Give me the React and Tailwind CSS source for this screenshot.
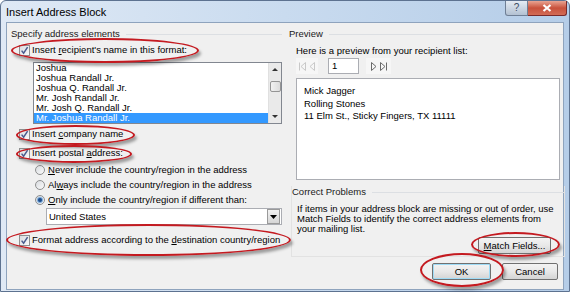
import React from 'react'

const ui = "font-['Liberation_Sans',Arial,sans-serif]"

const CheckBox = () => (
  <span className="w-[11px] h-[11px] border border-[#8e8f8f] bg-gradient-to-br from-[#d9dce0] to-[#fafafa] flex items-center justify-center shrink-0">
    <svg width="9" height="9" viewBox="0 0 9 9">
      <path d="M1.6 4.6 L3.6 7.2 L7.6 1.2" fill="none" stroke="#4a5c8e" strokeWidth="1.5" />
    </svg>
  </span>
)

const Radio = ({ on }) => (
  <span className="w-[10px] h-[10px] rounded-full border border-[#8e8f8f] bg-gradient-to-br from-[#d8dbdf] to-[#fbfbfb] flex items-center justify-center shrink-0">
    {on && <span className="w-[4px] h-[4px] rounded-full bg-[#1f4d8c] shadow-[0_0_1px_1px_#6fa3d8]" />}
  </span>
)

const U = ({ children }) => <span className="underline underline-offset-1">{children}</span>

const CheckRow = ({ children, className = '' }) => (
  <div className={`h-[12px] flex items-center ml-[8px] gap-[2px] ${className}`}>
    <CheckBox />
    <span className="leading-none">{children}</span>
  </div>
)

const RadioRow = ({ on, children, className = '' }) => (
  <div className={`h-[12px] flex items-center ml-[24px] gap-[3px] ${className}`}>
    <Radio on={on} />
    <span className="leading-none">{children}</span>
  </div>
)

const GroupLabel = ({ children }) => (
  <div className="h-[12px] flex items-center gap-[6px]">
    <span className="leading-none text-[#1a1a1a]">{children}</span>
    <span className="flex-1 h-px bg-[#dcdfe3]" />
  </div>
)

const Button = ({ children, className = '' }) => (
  <div className={`h-[17px] flex items-center justify-center rounded-[2px] border border-[#707070] bg-gradient-to-b from-[#f3f3f3] via-[#e8e8e8] to-[#d4d4d4] leading-none ${className}`}>
    {children}
  </div>
)

const Ring = ({ className }) => (
  <div className={`absolute rounded-[50%] border-2 border-[#c41a20] shadow-[2px_3px_3px_rgba(0,0,0,0.35)] ${className}`} />
)

const names = ['Joshua', 'Joshua Randall Jr.', 'Joshua Q. Randall Jr.', 'Mr. Josh Randall Jr.', 'Mr. Josh Q. Randall Jr.', 'Mr. Joshua Randall Jr.']

export default function App() {
  return (
    <div className={`w-[571px] h-[293px] relative bg-white ${ui} text-[9.5px] text-black`}>
      <div className="w-[570px] h-[292px] rounded-t-[6px] border border-[#5d7290] bg-gradient-to-r from-[#dfe9f5] via-[#c9dbef] to-[#b5cde8] flex flex-col">
        {/* Title bar */}
        <div className="h-[21px] flex items-start">
          <span className="ml-[5px] mt-[6px] text-[11px] leading-none text-black">Insert Address Block</span>
          <div className="ml-auto mr-[2px] flex">
            <div className="w-[23px] h-[15px] rounded-bl-[3px] border border-t-0 border-[#6f7f95] bg-gradient-to-b from-[#e4ebf3] to-[#b3c1d2] flex items-center justify-center text-[10px] leading-none text-[#3b4b63]">?</div>
            <div className="w-[39px] h-[15px] rounded-br-[3px] border border-t-0 border-l-0 border-[#7a2a2a] bg-gradient-to-b from-[#e8a493] via-[#c8513c] to-[#d26b55] flex items-center justify-center">
              <svg width="10" height="8" viewBox="0 0 10 8"><path d="M1.5 1 L8.5 7 M8.5 1 L1.5 7" stroke="white" strokeWidth="2.2" /></svg>
            </div>
          </div>
        </div>

        {/* Body */}
        <div className="mx-[5px] h-[268px] border border-[#8ea3bd] bg-[#f0f0f0] relative flex">
          {/* Left column */}
          <div className="ml-[4px] w-[271px] flex flex-col">
            <div className="mt-[5px]"><GroupLabel>Specify address elements</GroupLabel></div>
            <CheckRow className="mt-[4px]">Insert <U>r</U>ecipient's name in this format:</CheckRow>
            <div className="mt-[6px] ml-[22px] w-[249px] h-[62px] border border-[#828790] bg-white flex">
              <div className="flex-1 flex flex-col overflow-hidden">
                {names.map((n, i) => (
                  <div key={n} className={`h-[10px] shrink-0 pl-[2px] leading-[10px] ${i === 5 ? 'bg-[#3399ff] text-white' : ''}`}>{n}</div>
                ))}
              </div>
              <div className="w-[13px] bg-[#eaeaea] border-l border-[#e0e0e0] flex flex-col items-center">
                <svg className="mt-[4px]" width="6" height="4" viewBox="0 0 6 4"><path d="M0 4 L3 1 L6 4 Z" fill="#333" /></svg>
                <div className="mt-[10px] w-[11px] h-[11px] rounded-[2px] border border-[#959595] bg-gradient-to-r from-[#f2f2f2] to-[#dcdcdc]" />
                <svg className="mt-auto mb-[4px]" width="6" height="4" viewBox="0 0 6 4"><path d="M0 0 L3 3 L6 0 Z" fill="#333" /></svg>
              </div>
            </div>
            <CheckRow className="mt-[4px]">Insert <U>c</U>ompany name</CheckRow>
            <CheckRow className="mt-[7px]">Insert postal <U>a</U>ddress:</CheckRow>
            <RadioRow className="mt-[5px]"><U>N</U>ever include the country/region in the address</RadioRow>
            <RadioRow className="mt-[3px]">Al<U>w</U>ays include the country/region in the address</RadioRow>
            <RadioRow on className="mt-[3px]"><U>O</U>nly include the country/region if different than:</RadioRow>
            <div className="mt-[2px] ml-[35px] w-[236px] h-[17px] border border-[#abadb3] bg-white flex items-center">
              <span className="pl-[2px] flex-1 leading-none">United States</span>
              <div className="w-[13px] h-[15px] mr-px bg-gradient-to-b from-[#f2f2f2] to-[#d6d6d6] border border-[#9a9a9a] flex items-center justify-center">
                <svg width="7" height="4" viewBox="0 0 7 4"><path d="M0 0 L7 0 L3.5 4 Z" fill="#000" /></svg>
              </div>
            </div>
            <CheckRow className="mt-[9px]">Format address according to the <U>d</U>estination country/region</CheckRow>
          </div>

          {/* Right column */}
          <div className="ml-[7px] w-[275px] flex flex-col">
            <div className="mt-[5px]"><GroupLabel>Preview</GroupLabel></div>
            <div className="mt-[5px] ml-[7px] h-[12px] flex items-center leading-none">Here is a preview from your recipient list:</div>
            <div className="mt-px ml-[7px] h-[16px] flex items-center">
              <div className="w-[22px] h-[16px] bg-[#f6f6f6] flex items-center justify-center gap-[3px]">
                <svg width="7" height="9" viewBox="0 0 7 9"><path d="M0.5 0.5 V8.5 M6.5 0.5 L2 4.5 L6.5 8.5 Z" fill="none" stroke="#c8c8c8" /></svg>
                <svg width="6" height="9" viewBox="0 0 6 9"><path d="M5.5 0.5 L1 4.5 L5.5 8.5 Z" fill="none" stroke="#c8c8c8" /></svg>
              </div>
              <div className="ml-[10px] w-[31px] h-[16px] border border-[#abadb3] bg-white flex items-center pl-[3px] leading-none">1</div>
              <div className="ml-[7px] w-[25px] h-[16px] bg-[#f6f6f6] flex items-center justify-center gap-[3px]">
                <svg width="6" height="9" viewBox="0 0 6 9"><path d="M0.5 0.5 L5 4.5 L0.5 8.5 Z" fill="none" stroke="#6a6a6a" /></svg>
                <svg width="7" height="9" viewBox="0 0 7 9"><path d="M6.5 0.5 V8.5 M0.5 0.5 L5 4.5 L0.5 8.5 Z" fill="none" stroke="#6a6a6a" /></svg>
              </div>
            </div>
            <div className="mt-[4px] ml-[7px] w-[264px] h-[102px] border border-[#abadb3] bg-white pl-[7px] pt-[6px] leading-[12.5px]">
              <div>Mick Jagger</div>
              <div>Rolling Stones</div>
              <div>11 Elm St., Sticky Fingers, TX 11111</div>
            </div>
            <div className="mt-[6px] ml-[2px] mr-[-2px] h-[71px] border border-t-0 border-[#e2e2e2] flex flex-col">
              <GroupLabel>Correct Problems</GroupLabel>
              <div className="mt-[6px] ml-[5px] leading-[10px]">
                If items in your address block are missing or out of order, use<br />
                Match Fields to identify the correct address elements from<br />
                your mailing list.
              </div>
              <Button className="mt-[3px] ml-auto mr-[13px] w-[73px]"><U>M</U>atch Fields...</Button>
            </div>
            <div className="mt-[6px] flex justify-end gap-[11px] mr-[5px]">
              <Button className="w-[59px] border-[#3c7fb1] shadow-[inset_0_0_0_1px_#9edbf6]">OK</Button>
              <Button className="w-[56px]">Cancel</Button>
            </div>
          </div>

          {/* Annotation rings */}
          <Ring className="left-[4px] top-[15px] w-[188px] h-[25px]" />
          <Ring className="left-[9px] top-[102px] w-[119px] h-[20px]" />
          <Ring className="left-[9px] top-[122px] w-[116px] h-[18px]" />
          <Ring className="left-[-1px] top-[201px] w-[285px] h-[32px]" />
          <Ring className="left-[464px] top-[209px] w-[89px] h-[25px]" />
          <Ring className="left-[413px] top-[230px] w-[84px] h-[34px]" />
        </div>
      </div>
    </div>
  )
}
